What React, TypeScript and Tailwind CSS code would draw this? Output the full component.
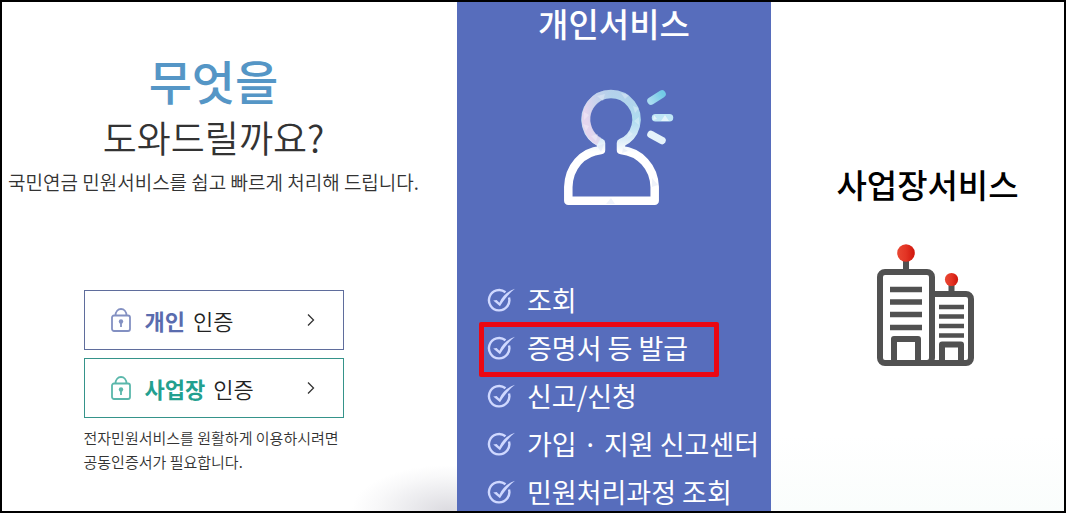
import { clsx } from 'clsx';

const FONT = "font-['Noto_Sans_CJK_KR','Noto_Sans',sans-serif]";

const services = [
    { label: '조회' },
    { label: '증명서 등 발급', highlighted: true },
    { label: '신고/신청' },
    { label: '가입 · 지원 신고센터' },
    { label: '민원처리과정 조회' },
];

function LockIcon() {
    return (
        <svg viewBox="0 0 20 24" className="h-6 w-5 shrink-0 opacity-75" fill="none" stroke="currentColor" aria-hidden="true">
            <rect x="1" y="7.5" width="18" height="15.5" rx="2" strokeWidth="1.8" />
            <path d="M4.5 7.5C4.5 3.5 7 1 10 1s5.5 2.5 5.5 6.5" strokeWidth="1.8" />
            <circle cx="10" cy="13.5" r="2.2" fill="currentColor" stroke="none" />
            <path d="M10 14v5" strokeWidth="1.8" />
        </svg>
    );
}

function ArrowIcon() {
    return (
        <svg viewBox="0 0 8 14" className="ml-auto h-[14px] w-2 shrink-0" fill="none" stroke="#333" strokeWidth="1.3" aria-hidden="true">
            <path d="M1 1.5L6.5 7 1 12.5" />
        </svg>
    );
}

function CheckIcon() {
    return (
        <svg viewBox="0 0 28 24" className="h-6 w-7 shrink-0" fill="none" stroke="#cfd8ff" aria-hidden="true">
            <path d="M18.5 4.2A10.2 10.2 0 1 0 22 9.5" strokeWidth="2.4" />
            <path d="M6.2 12.5l3.4-.6 2.8 2.8C15.5 8 20 3.5 28 .8 22 5.5 17 11.5 13 18.2z" fill="#cfd8ff" stroke="none" />
        </svg>
    );
}

function PersonIcon() {
    return (
        <svg viewBox="0 0 114 118" className="h-[118px] w-[114px]" fill="none" aria-hidden="true">
            <defs>
                <linearGradient id="person" x1="0" y1="0" x2="0" y2="64" gradientUnits="userSpaceOnUse">
                    <stop offset="0" stopColor="#b4cfea" />
                    <stop offset="0.5" stopColor="#aedcef" />
                    <stop offset="0.8" stopColor="#d9ebf8" />
                    <stop offset="1" stopColor="#ffffff" />
                </linearGradient>
                <linearGradient id="blush" x1="26" y1="30" x2="56" y2="24" gradientUnits="userSpaceOnUse">
                    <stop offset="0" stopColor="#e4d5ee" />
                    <stop offset="1" stopColor="#c4d0eb" stopOpacity="0" />
                </linearGradient>
                <linearGradient id="ray" x1="89" y1="13" x2="101" y2="5" gradientUnits="userSpaceOnUse">
                    <stop offset="0" stopColor="#a9dcf0" />
                    <stop offset="1" stopColor="#72cbe6" />
                </linearGradient>
            </defs>
            <path
                d="M40 55A25.5 25.5 0 1 1 60 55V62C79 64 93 79 93.7 99v13.7H7.3V99C8 79 21 64 40 62z"
                stroke="url(#person)"
                strokeWidth="8.5"
                strokeLinejoin="round"
            />
            <path d="M38 53.5A25.5 25.5 0 0 1 50 5.8" stroke="url(#blush)" strokeWidth="8.5" />
            <g fill="#fff" opacity=".3">
                <path d="M36 8l6 5 2-7zM60 5l4 6 4-4zM72 18l6 2-4 5zM73 33l5-4v8zM68 43l-2 7 6-4z" />
                <path d="M23 24l5 3-5 5zM22 36l6 2-3 5zM30 48l7-2-2 7z" />
            </g>
            <g fill="#cfd9f0" opacity=".35">
                <path d="M36 58l7-2-3 8zM62 60l5 3-6 2zM91 90l6 7-6 2zM45 116l5-6 4 6z" />
            </g>
            <g strokeWidth="7.5" strokeLinecap="round">
                <path d="M90 13l11-7" stroke="url(#ray)" />
                <path d="M94.5 29.7h14" stroke="#bfe6f6" />
                <path d="M90 46.5l11 6" stroke="#e5f3fb" />
            </g>
            <path d="M100 33l4-6 4 6zM93 27l3 4-4 1z" fill="#fff" opacity=".6" />
        </svg>
    );
}

function BuildingIcon() {
    return (
        <svg viewBox="0 0 98 124" className="h-[124px] w-[98px]" fill="none" stroke="#515151" aria-hidden="true">
            <defs>
                <linearGradient id="beacon">
                    <stop offset="0" stopColor="#e94733" />
                    <stop offset="0.5" stopColor="#e33424" />
                    <stop offset="1" stopColor="#cf150c" />
                </linearGradient>
            </defs>
            <path d="M29 16v12M74.5 40v9" strokeWidth="6" />
            <rect x="3" y="28" width="52" height="91" rx="5" strokeWidth="6" />
            <path d="M55 50h34a5 5 0 0 1 5 5v59a5 5 0 0 1-5 5H50" strokeWidth="6" />
            <path d="M13 45.5h32M13 58h32M13 70.5h32M13 83.5h32" strokeWidth="5.5" />
            <path d="M62 63h25M62 72.5h25M62 82h25M62 91.5h25" strokeWidth="4.5" />
            <path d="M17 119V95h24v24M65 119v-18.5h19V119" strokeWidth="6" strokeLinejoin="round" />
            <circle cx="29" cy="9" r="8.8" fill="url(#beacon)" stroke="none" />
            <circle cx="74.5" cy="35.5" r="6.6" fill="url(#beacon)" stroke="none" />
        </svg>
    );
}

interface AuthButtonProps {
    name: string;
    className: string;
}

function AuthButton({ name, className }: AuthButtonProps) {
    return (
        <button type="button" className={clsx('flex h-[60px] w-full items-center border bg-white pr-7 pl-[26px]', className)}>
            <LockIcon />
            <span className="ml-[14px] flex gap-2 text-[22px] leading-8">
                <strong className="font-bold">{name}</strong>
                <span className="font-[350] text-[#222]">인증</span>
            </span>
            <ArrowIcon />
        </button>
    );
}

export default function App() {
    return (
        <div className={clsx('grid min-h-screen grid-cols-[455fr_314fr_293fr] overflow-hidden border-2 border-black bg-white', FONT)}>
            <section className="flex flex-col items-center bg-[radial-gradient(ellipse_96px_46px_at_98%_100%,#dcdbe0,#ebebee_40%,#f8f8f9_75%,transparent)] pt-[46px] text-[#333]">
                <h1 className="flex flex-col items-center pr-8">
                    <span className="text-[47px] leading-[64px] font-medium text-[#5596c6]">무엇을</span>
                    <span className="text-[37px] leading-[50px] font-[350]">도와드릴까요?</span>
                </h1>
                <p className="pt-0.5 pr-8 text-[19px] leading-9 font-[350] whitespace-nowrap">
                    국민연금 민원서비스를 쉽고 빠르게 처리해 드립니다.
                </p>
                <div className="mt-[90px] mr-8 flex w-[260px] flex-col gap-2">
                    <AuthButton name="개인" className="border-[#5f6d9c] text-[#5a6cae]" />
                    <AuthButton name="사업장" className="border-[#35938a] text-[#23a08f]" />
                    <p className="text-[15px] leading-6 font-[350] whitespace-nowrap">
                        전자민원서비스를 원활하게 이용하시려면
                        <br />
                        공동인증서가 필요합니다.
                    </p>
                </div>
            </section>

            <section className="flex flex-col bg-[#576dbc] text-white">
                <h2 className="text-center text-[33px] leading-[42px] font-medium">개인서비스</h2>
                <div className="mt-11 flex justify-center pl-2">
                    <PersonIcon />
                </div>
                <ul className="mt-[76px] flex flex-col gap-3 pl-[30px]">
                    {services.map(({ label, highlighted }) => (
                        <li key={label} className="relative h-9">
                            <a href="#" className="flex h-9 items-center gap-3 text-[27px] whitespace-nowrap">
                                <CheckIcon />
                                {label}
                            </a>
                            {highlighted && (
                                <span className="pointer-events-none absolute -top-2 -left-2 h-[55px] w-60 rounded-xs border-[5px] border-[#ec0712]" />
                            )}
                        </li>
                    ))}
                </ul>
            </section>

            <section className="flex flex-col items-center bg-linear-to-b from-white from-85% to-[#fafdfc] pt-40 text-black">
                <h2 className="pl-5 text-[33px] leading-[44px] font-medium">사업장서비스</h2>
                <div className="mt-[38px] pl-4">
                    <BuildingIcon />
                </div>
            </section>
        </div>
    );
}
